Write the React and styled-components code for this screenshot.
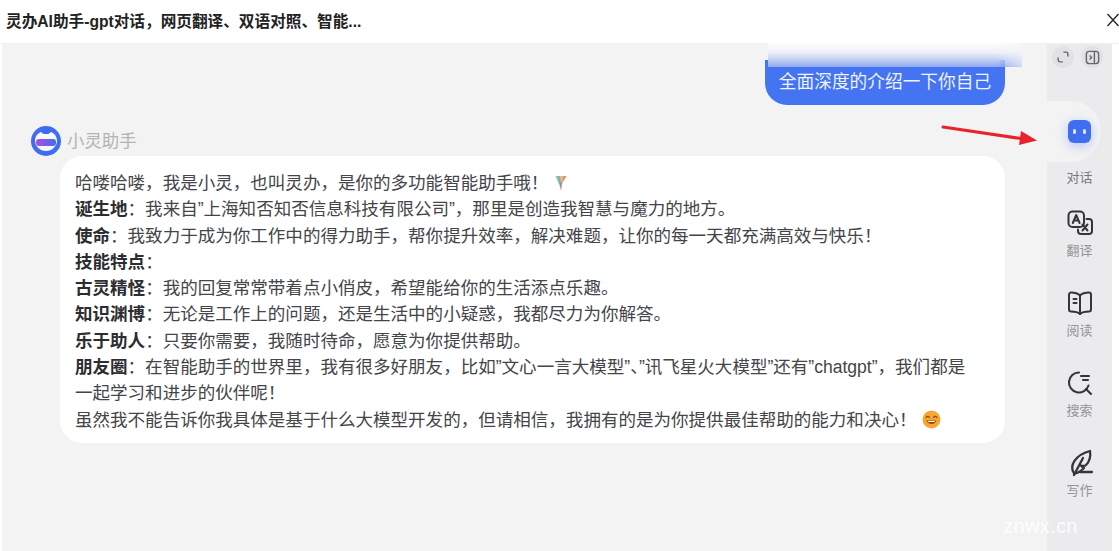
import React from "react";
import styled, { createGlobalStyle } from "styled-components";

const GlobalStyle = createGlobalStyle`
    html, body {
        margin: 0;
        padding: 0;
        background: #ffffff;
    }

    body {
        font-family: "Liberation Sans", "Noto Sans CJK SC", sans-serif;
    }
`;

const Page = styled.div`
    width: 1119px;
    height: 551px;
    display: flex;
    flex-direction: column;
    overflow: hidden;
    position: relative;
`;

const Header = styled.header`
    height: 44px;
    flex: none;
    display: flex;
    align-items: center;
    justify-content: space-between;
    padding: 0 0 0 6px;
    border-bottom: 1px solid #f0f0f0;
    box-sizing: border-box;
`;

const Title = styled.h1`
    margin: 0 0 3px;
    font-size: 15.65px;
    font-weight: 700;
    color: #222;
`;

const CloseButton = styled.button`
    width: 20px;
    height: 20px;
    border: 0;
    padding: 0;
    margin-right: 0;
    background: none;
    color: #222;
    display: flex;
`;

const Body = styled.div`
    flex: 1;
    display: flex;
    min-height: 0;
    padding: 0 7px 0 2px;
`;

const Chat = styled.main`
    flex: 1;
    background: #f3f3f3;
    padding: 16px 42px 0 29px;
    display: flex;
    flex-direction: column;
    position: relative;
`;

const UserBubble = styled.div`
    align-self: flex-end;
    width: 240px;
    height: 45px;
    box-sizing: border-box;
    border-radius: 0 0 22px 22px;
    background: #4474f2;
    color: #eef3ff;
    font-size: 17.7px;
    line-height: 44px;
    text-align: center;
    white-space: nowrap;
`;

const BubbleFade = styled.div`
    position: absolute;
    left: 766px;
    top: -14px;
    width: 254px;
    height: 37px;
    background: linear-gradient(180deg, #ffffff 0%, #ffffff 32%, #eef1fb 60%, #b9c8f2 84%, #90a9ee 100%);
    mask-image: linear-gradient(90deg, #000 0%, #000 90%, rgba(0, 0, 0, 0.35) 100%);
`;

const BotRow = styled.div`
    display: flex;
    align-items: center;
    gap: 6px;
    margin-top: 21px;
    height: 30px;
`;

const BotName = styled.span`
    font-size: 17.4px;
    line-height: 28px;
    color: #b4b4b6;
`;

const Message = styled.div`
    margin-left: 29px;
    height: 287px;
    box-sizing: border-box;
    padding: 14px 24px 0 15px;
    background: #ffffff;
    border-radius: 22px;
    font-size: 17.55px;
    line-height: 26.3px;
    color: #43454a;
`;

const Strong = styled.b`
    font-weight: 700;
    color: #2c2d30;
`;

const Sidebar = styled.aside`
    width: 65px;
    flex: none;
    background: #ebebed;
    display: flex;
    flex-direction: column;
    align-items: center;
    position: relative;
`;

const TopTools = styled.div`
    display: flex;
    gap: 7px;
    height: 57px;
    box-sizing: border-box;
    margin-left: 5px;
    align-self: stretch;
`;

const ToolIcon = styled.span`
    width: 22px;
    height: 22px;
    margin-top: 2px;
    border-radius: 50%;
    background: #e2e2e4;
    display: flex;
    align-items: center;
    justify-content: center;
    color: #65676b;
`;

const ActiveTab = styled.div`
    align-self: flex-start;
    width: 54px;
    height: 61px;
    border-radius: 0 30px 30px 0;
    background: #f3f3f4;
    display: flex;
    align-items: center;
    justify-content: center;
    margin-bottom: 8px;
`;

const RobotBadge = styled.div`
    width: 23px;
    height: 23px;
    margin-left: 10px;
    border-radius: 6px;
    background: #3f6ff0;
    box-shadow: 0 3px 12px rgba(63, 111, 240, 0.35);
    display: flex;
    align-items: center;
    justify-content: center;
    gap: 7px;
`;

const RobotEye = styled.i`
    width: 3px;
    height: 5px;
    border-radius: 2px;
    background: #dfe8ff;
`;

const NavItem = styled.div`
    display: flex;
    flex-direction: column;
    align-items: center;
    height: ${(p) => p.$height || 80}px;
`;

const NavGlyph = styled.span`
    width: 28px;
    height: 28px;
    display: flex;
    color: #34363a;
    margin-bottom: 6px;
`;

const NavLabel = styled.span`
    font-size: 13px;
    line-height: 16px;
    color: ${(p) => (p.$active ? "#77797d" : "#929497")};
`;

const Arrow = styled.svg`
    position: absolute;
    left: 940px;
    top: 122px;
`;

const Watermark = styled.span`
    position: absolute;
    right: 41px;
    bottom: 13px;
    font-size: 19.5px;
    letter-spacing: 0.6px;
    color: rgba(255, 255, 255, 0.92);
`;

const BotLogo = () => (
    <svg width="30" height="30" viewBox="0 0 30 30">
        <defs>
            <linearGradient id="band" x1="0" x2="1" y1="0" y2="0">
                <stop offset="0" stopColor="#b44be0" />
                <stop offset="1" stopColor="#3f6df0" />
            </linearGradient>
        </defs>
        <circle cx="15" cy="15" r="15" fill="#3f6df0" />
        <path d="M4 15c0-5 3-8 6-9l2.500 2h5l2.500-2c3 1 6 4 6 9s-5 10-11 10-11-5-11-10z" fill="#f6f7fb" />
        <rect x="5" y="13" width="20" height="7" rx="3" fill="url(#band)" />
    </svg>
);

const SmileEmoji = () => (
    <svg width="19" height="19" viewBox="0 0 19 19" style={{ verticalAlign: "-3px", marginLeft: 5 }}>
        <circle cx="9.500" cy="9.500" r="9" fill="#f7a632" />
        <path d="M4 7.500c1-1.400 2.500-1.400 3.500 0M11.500 7.500c1-1.400 2.500-1.400 3.500 0" stroke="#8a4a10" strokeWidth="1.200" fill="none" strokeLinecap="round" />
        <path d="M4.500 10.500c1.500 4.500 8.500 4.500 10 0z" fill="#8a4a10" />
        <path d="M5.800 11h7.400l-.6 1H6.400z" fill="#fff" />
    </svg>
);

const RainbowEmoji = () => (
    <svg width="14" height="18" viewBox="0 0 14 18" style={{ verticalAlign: "-3px", marginLeft: 6 }}>
        <path d="M1 2h12L8 10l-1 7-2-7z" fill="#e9c46a" />
        <path d="M3 2h3l1 6-2 2z" fill="#6cb7d8" />
        <path d="M9 2h3L8 9z" fill="#e58a8a" />
        <path d="M5.500 9L8 8l-1 8z" fill="#9a7fc8" />
    </svg>
);

const TRANSLATE = (
    <svg viewBox="0 0 28 28" width="28" height="28" fill="none" stroke="currentColor" strokeWidth="2" strokeLinecap="round" strokeLinejoin="round">
        <rect x="2.500" y="2.500" width="15.500" height="15.500" rx="4" />
        <path d="M6.800 14l3.400-8 3.400 8M8 11.500h4.500" />
        <path d="M20.500 10h2.500a3 3 0 0 1 3 3v9a3 3 0 0 1-3 3h-8a3 3 0 0 1-3-3v-1.500" />
        <path d="M16.500 15.500l5 6M21.500 15.500l-5 6" />
    </svg>
);

const READ = (
    <svg viewBox="0 0 28 28" width="28" height="28" fill="none" stroke="currentColor" strokeWidth="2" strokeLinecap="round" strokeLinejoin="round">
        <path d="M14 6.500C12 4.500 8.500 3.500 5 3.500a2 2 0 0 0-2 2v15a2 2 0 0 0 2 2c3.500 0 7 .6 9 2.500 2-1.900 5.500-2.500 9-2.500a2 2 0 0 0 2-2v-15a2 2 0 0 0-2-2c-3.500 0-7 1-9 3z" />
        <path d="M14 6.500V25M7.500 10h3M7.500 14h3" />
    </svg>
);

const SEARCH = (
    <svg viewBox="0 0 28 28" width="28" height="28" fill="none" stroke="currentColor" strokeWidth="2.100" strokeLinecap="round" strokeLinejoin="round">
        <path d="M13 3.500a10 10 0 1 0 9.500 13" />
        <path d="M20 20l5 5M15 7h8M17 11h5" />
    </svg>
);

const WRITE = (
    <svg viewBox="0 0 28 28" width="28" height="28" fill="none" stroke="currentColor" strokeWidth="2.300" strokeLinecap="round" strokeLinejoin="round">
        <path d="M8 24C3 17 9 6 24 2c1 6-1 11-4 14-1 1-3 1-5 .5 1 1.500 2 2 3 2.500-3 3-7 5.500-10 5.500z" />
        <path d="M17 9L8 26M14 23h12" />
    </svg>
);

const NAV = [
    { label: "翻译", icon: TRANSLATE },
    { label: "阅读", icon: READ },
    { label: "搜索", icon: SEARCH },
    { label: "写作", icon: WRITE },
];

// full-width punctuation, kept as escapes so it can't get swapped for ascii
const COMMA = "\uFF0C";
const COLON = "\uFF1A";
const BANG = "\uFF01";
const Q = "\u201D";

const TITLE = `灵办AI助手-gpt对话${COMMA}网页翻译、双语对照、智能...`;

const LINES = [
    { text: `哈喽哈喽${COMMA}我是小灵${COMMA}也叫灵办${COMMA}是你的多功能智能助手哦${BANG}`, emoji: <RainbowEmoji /> },
    { head: "诞生地", text: `${COLON}我来自${Q}上海知否知否信息科技有限公司${Q}${COMMA}那里是创造我智慧与魔力的地方。` },
    { head: "使命", text: `${COLON}我致力于成为你工作中的得力助手${COMMA}帮你提升效率${COMMA}解决难题${COMMA}让你的每一天都充满高效与快乐${BANG}` },
    { head: "技能特点", text: COLON },
    { head: "古灵精怪", text: `${COLON}我的回复常常带着点小俏皮${COMMA}希望能给你的生活添点乐趣。` },
    { head: "知识渊博", text: `${COLON}无论是工作上的问题${COMMA}还是生活中的小疑惑${COMMA}我都尽力为你解答。` },
    { head: "乐于助人", text: `${COLON}只要你需要${COMMA}我随时待命${COMMA}愿意为你提供帮助。` },
    { head: "朋友圈", text: `${COLON}在智能助手的世界里${COMMA}我有很多好朋友${COMMA}比如${Q}文心一言大模型${Q}、${Q}讯飞星火大模型${Q}还有${Q}chatgpt${Q}${COMMA}我们都是一起学习和进步的伙伴呢${BANG}` },
    { text: `虽然我不能告诉你我具体是基于什么大模型开发的${COMMA}但请相信${COMMA}我拥有的是为你提供最佳帮助的能力和决心${BANG}`, emoji: <SmileEmoji /> },
];

export default function App() {
    return (
        <Page>
            <GlobalStyle />
            <Header>
                <Title>{TITLE}</Title>
                <CloseButton aria-label="关闭">
                    <svg width="20" height="20" viewBox="0 0 20 20" stroke="currentColor" strokeWidth="1.300">
                        <path d="M8.500 2l11 12M19.500 2l-11 12" />
                    </svg>
                </CloseButton>
            </Header>
            <Body>
                <Chat>
                    <UserBubble>全面深度的介绍一下你自己</UserBubble>
                    <BubbleFade />
                    <BotRow>
                        <BotLogo />
                        <BotName>小灵助手</BotName>
                    </BotRow>
                    <Message>
                        {LINES.map((line, i) => (
                            <div key={i}>
                                {line.head && <Strong>{line.head}</Strong>}
                                {line.text}
                                {line.emoji}
                            </div>
                        ))}
                    </Message>
                </Chat>
                <Sidebar>
                    <TopTools>
                        <ToolIcon>
                            <svg viewBox="0 0 18 18" width="16" height="16" fill="none" stroke="currentColor" strokeWidth="1.600" strokeLinecap="round">
                                <path d="M10 3.500h2.500a2 2 0 0 1 2 2V8M8 14.500H5.500a2 2 0 0 1-2-2V10" />
                            </svg>
                        </ToolIcon>
                        <ToolIcon>
                            <svg viewBox="0 0 18 18" width="17" height="17" fill="none" stroke="currentColor" strokeWidth="1.500">
                                <rect x="2.500" y="2.500" width="13" height="13" rx="3" />
                                <path d="M11 2.500v13M6 7l2 2-2 2" />
                            </svg>
                        </ToolIcon>
                    </TopTools>
                    <ActiveTab>
                        <RobotBadge>
                            <RobotEye />
                            <RobotEye />
                        </RobotBadge>
                    </ActiveTab>
                    <NavItem $height={39}>
                        <NavLabel $active>对话</NavLabel>
                    </NavItem>
                    {NAV.map((item) => (
                        <NavItem key={item.label}>
                            <NavGlyph>{item.icon}</NavGlyph>
                            <NavLabel>{item.label}</NavLabel>
                        </NavItem>
                    ))}
                </Sidebar>
            </Body>
            <Arrow width="100" height="36" viewBox="0 0 100 36">
                <path d="M3 5L84 17" stroke="#e8232e" strokeWidth="3" strokeLinecap="round" />
                <path d="M81 9L97 18.500 79 23z" fill="#e8232e" />
            </Arrow>
            <Watermark>znwx.cn</Watermark>
        </Page>
    );
}
